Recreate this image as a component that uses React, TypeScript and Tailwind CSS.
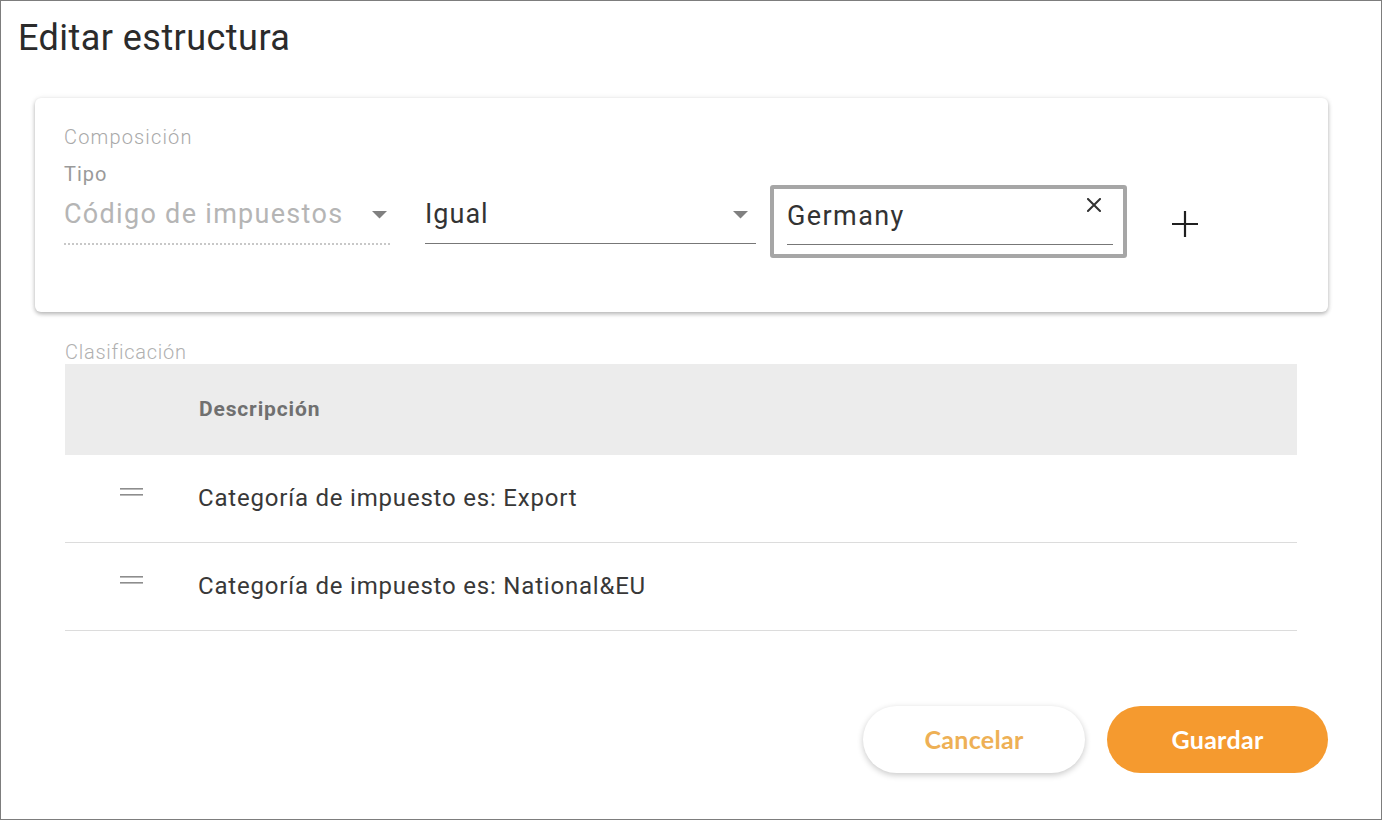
const ROWS = ["Categoría de impuesto es: Export", "Categoría de impuesto es: National&EU"];

function Caret() {
  return (
    <svg width="15" height="8" viewBox="0 0 15 8" className="shrink-0">
      <path d="M0 0 L15 0 L7.5 7.5 Z" fill="#808080" />
    </svg>
  );
}

function DragHandle() {
  return (
    <svg width="23" height="10" viewBox="0 0 23 10" className="shrink-0">
      <rect x="0" y="1" width="23" height="1.6" fill="#8d8d8d" />
      <rect x="0" y="7" width="23" height="1.6" fill="#8d8d8d" />
    </svg>
  );
}

function ClearIcon() {
  return (
    <svg width="14" height="14" viewBox="0 0 14 14">
      <path d="M1 1 L13 13 M13 1 L1 13" stroke="#333" strokeWidth="2" strokeLinecap="square" />
    </svg>
  );
}

function PlusIcon() {
  return (
    <svg width="26" height="26" viewBox="0 0 26 26" className="shrink-0">
      <path d="M13 0 V26 M0 13 H26" stroke="#1f1f1f" strokeWidth="2.2" />
    </svg>
  );
}

export default function App() {
  return (
    <div
      className="w-[1382px] h-[820px] bg-white border border-[#7d7d7d] flex flex-col overflow-hidden"
      style={{ fontFamily: "Roboto, 'Noto Sans', sans-serif" }}
    >
      {/* Title */}
      <h1 className="pl-[17px] pt-[12px] text-[36px] leading-[50px] text-[#2b2b2b] tracking-[0.45px]">Editar estructura</h1>

      {/* Composicion card */}
      <div className="ml-[34px] mr-[53px] mt-[35px] h-[214px] rounded-[6px] bg-white shadow-[0_2px_4px_rgba(0,0,0,0.28),0_0_6px_rgba(0,0,0,0.06)] px-[29px] pt-[26px]">
        <div className="text-[20px] leading-[26px] text-[#a9a9a9] font-light tracking-[1.15px]">Composición</div>
        <div className="mt-[12px] text-[20px] leading-[24px] text-[#9a9a9a] tracking-[1px]">Tipo</div>
        <div className="flex items-start">
          <div className="w-[326px] h-[59px] flex items-center justify-between border-b-2 border-dotted border-[#c8c8c8] pr-[3px]">
            <span className="text-[27px] text-[#b5b5b5] tracking-[1.3px]">Código de impuestos</span>
            <Caret />
          </div>
          <div className="ml-[35px] w-[331px] h-[58px] flex items-center justify-between border-b border-[#777] pr-[8px]">
            <span className="text-[27px] text-[#333] tracking-[1px]">Igual</span>
            <Caret />
          </div>
          <div className="ml-[14px] -mt-[1px] w-[357px] h-[73px] border-[4px] border-[#a6a6a6] rounded-[3px] pl-[13px] pr-[10px]">
            <div className="relative h-[56px] border-b border-[#777] flex items-center">
              <span className="text-[27px] text-[#333] tracking-[1.4px]">Germany</span>
              <span className="absolute right-[12px] top-[9px]">
                <ClearIcon />
              </span>
            </div>
          </div>
          <div className="ml-[45px] mt-[25px]">
            <PlusIcon />
          </div>
        </div>
      </div>

      {/* Clasificacion */}
      <div className="ml-[64px] mr-[84px] mt-[29px]">
        <div className="text-[20px] leading-[23px] text-[#b0b0b0] font-light tracking-[0.75px]">Clasificación</div>
        <div className="h-[91px] bg-[#ececec] flex items-center pl-[134px]">
          <span className="text-[21px] font-bold text-[#707070] tracking-[0.85px]">Descripción</span>
        </div>
        {ROWS.map((r) => (
          <div key={r} className="h-[88px] flex items-center border-b border-[#dcdcdc] pb-[2px]">
            <div className="w-[133px] pl-[55px] -mt-[12px]">
              <DragHandle />
            </div>
            <span className="text-[24px] text-[#383838] tracking-[0.8px]">{r}</span>
          </div>
        ))}
      </div>

      {/* Buttons */}
      <div
        className="mt-auto mb-[46px] mr-[53px] flex justify-end gap-[22px]"
        style={{ fontFamily: "Lato, 'Open Sans', sans-serif" }}
      >
        <button className="w-[222px] h-[67px] rounded-full bg-white shadow-[0_2px_6px_rgba(0,0,0,0.22)] text-[25px] font-bold text-[#eeb055] tracking-[0.3px]">
          Cancelar
        </button>
        <button className="w-[221px] h-[67px] rounded-full bg-[#f59a2f] text-[25px] font-bold text-white tracking-[0.3px]">
          Guardar
        </button>
      </div>
    </div>
  );
}
